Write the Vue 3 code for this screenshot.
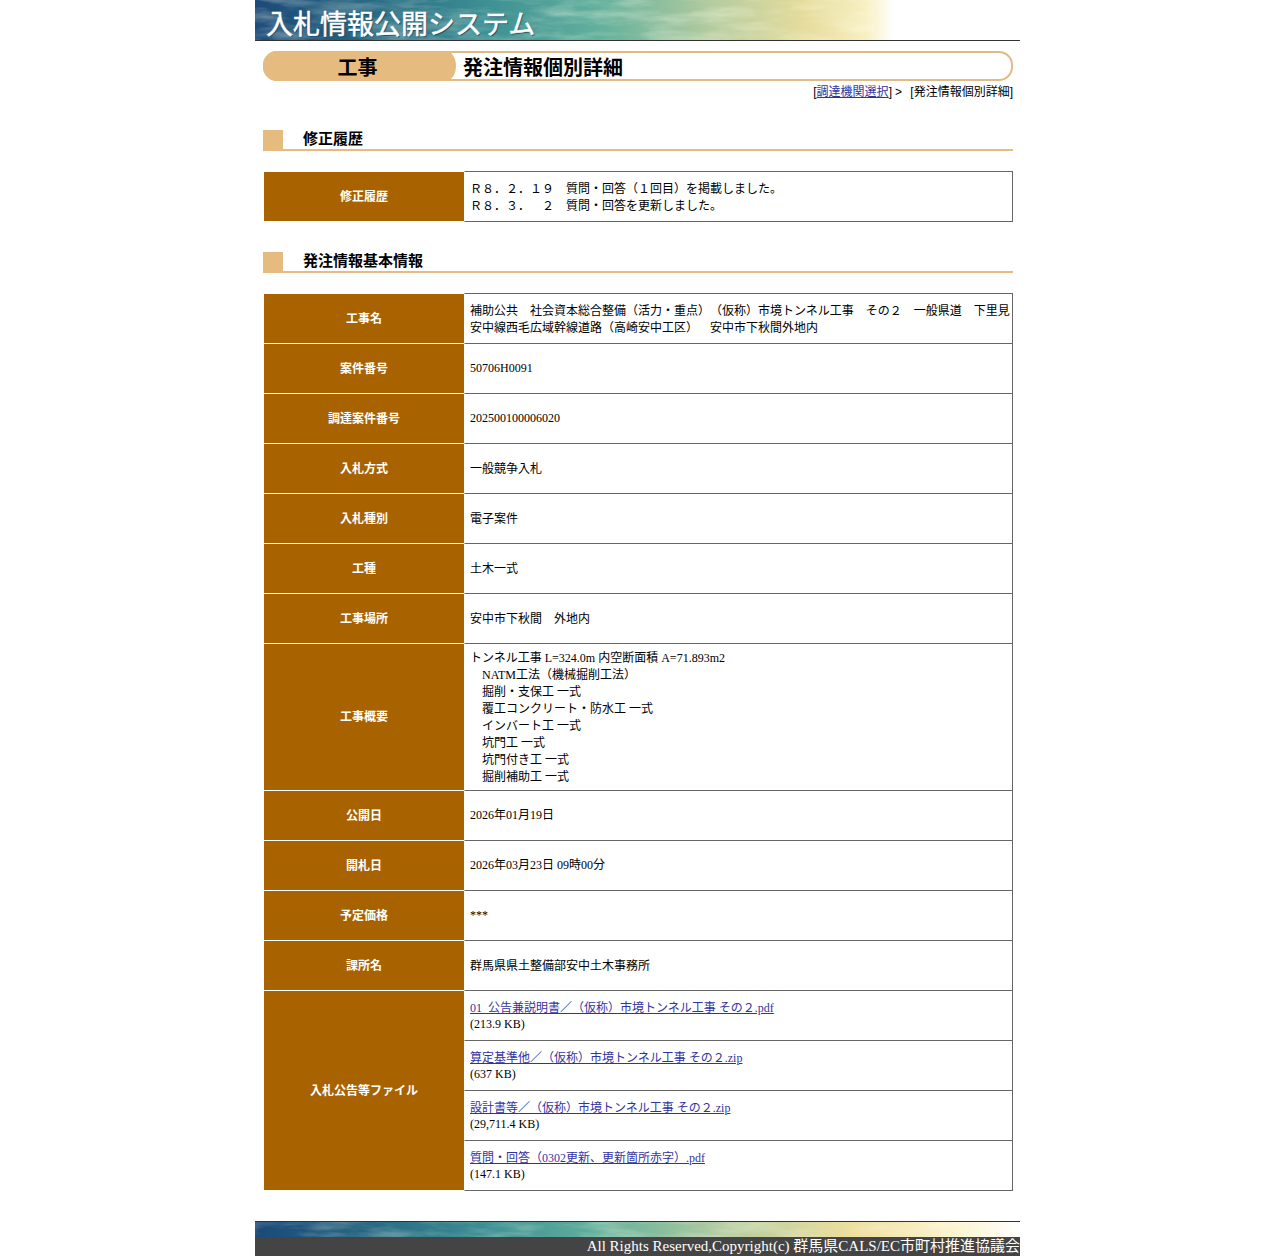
<script setup>
const history = [
  "Ｒ８．２．１９　質問・回答（１回目）を掲載しました。",
  "Ｒ８．３．　２　質問・回答を更新しました。",
];

// num: 英数字が主体の行(ベースラインの関係で少し上に出す)
const rows = [
  { label: "工事名", lines: ["補助公共　社会資本総合整備（活力・重点）（仮称）市境トンネル工事　その２　一般県道　下里見安中線西毛広域幹線道路（高崎安中工区）　安中市下秋間外地内"] },
  { label: "案件番号", num: true, lines: ["50706H0091"] },
  { label: "調達案件番号", num: true, lines: ["202500100006020"] },
  { label: "入札方式", lines: ["一般競争入札"] },
  { label: "入札種別", lines: ["電子案件"] },
  { label: "工種", lines: ["土木一式"] },
  { label: "工事場所", lines: ["安中市下秋間　外地内"] },
  {
    label: "工事概要",
    tall: true,
    lines: [
      "トンネル工事 L=324.0m 内空断面積 A=71.893m2",
      "　NATM工法（機械掘削工法）",
      "　掘削・支保工 一式",
      "　覆工コンクリート・防水工 一式",
      "　インバート工 一式",
      "　坑門工 一式",
      "　坑門付き工 一式",
      "　掘削補助工 一式",
    ],
  },
  { label: "公開日", num: true, lines: ["2026年01月19日"] },
  { label: "開札日", num: true, lines: ["2026年03月23日 09時00分"] },
  { label: "予定価格", num: true, lines: ["***"] },
  { label: "課所名", lines: ["群馬県県土整備部安中土木事務所"] },
];

const files = [
  { name: "01\u00a0\u00a0公告兼説明書／（仮称）市境トンネル工事 その２.pdf", size: "(213.9 KB)" },
  { name: "算定基準他／（仮称）市境トンネル工事 その２.zip", size: "(637 KB)" },
  { name: "設計書等／（仮称）市境トンネル工事 その２.zip", size: "(29,711.4 KB)" },
  { name: "質問・回答（0302更新、更新箇所赤字）.pdf", size: "(147.1 KB)" },
];
</script>

<template>
  <div class="page">
    <!-- ヘッダー画像 -->
    <header class="banner">
      <svg class="clouds" width="765" height="40" aria-hidden="true">
        <filter id="cloudTop" x="0" y="0" width="100%" height="100%">
          <feTurbulence type="fractalNoise" baseFrequency="0.018 0.09" numOctaves="4" seed="7" />
          <feColorMatrix values="0 0 0 0 1  0 0 0 0 1  0 0 0 0 0.85  0 0 0 1.6 -0.62" />
        </filter>
        <rect width="620" height="40" filter="url(#cloudTop)" opacity="0.45" />
      </svg>
      <span class="banner-title">入札情報公開システム</span>
    </header>

    <div class="title-bar">
      <div class="title-kind">工事</div>
      <h1 class="title-text">発注情報個別詳細</h1>
    </div>
    <div class="crumb">[<a href="#">調達機関選択</a>]<span class="arrow">&gt;</span>&nbsp;[発注情報個別詳細]</div>

    <h2 class="section"><span class="mark"></span>修正履歴</h2>
    <table class="info">
      <tbody>
        <tr>
          <th class="end">修正履歴</th>
          <td><div v-for="h in history" :key="h">{{ h }}</div></td>
        </tr>
      </tbody>
    </table>

    <h2 class="section"><span class="mark"></span>発注情報基本情報</h2>
    <table class="info">
      <tbody>
        <tr v-for="row in rows" :key="row.label" :class="{ tall: row.tall }">
          <th>{{ row.label }}</th>
          <td :class="{ num: row.num }"><div v-for="line in row.lines" :key="line">{{ line }}</div></td>
        </tr>
        <tr v-for="(file, i) in files" :key="file.name">
          <th v-if="i === 0" class="end" :rowspan="files.length">入札公告等ファイル</th>
          <td class="file">
            <a href="#">{{ file.name }}</a><br />{{ file.size }}
          </td>
        </tr>
      </tbody>
    </table>

    <footer class="footer">
      <div class="footer-image">
        <svg class="clouds" width="765" height="15" aria-hidden="true">
          <filter id="cloudBottom" x="0" y="0" width="100%" height="100%">
            <feTurbulence type="fractalNoise" baseFrequency="0.018 0.09" numOctaves="4" seed="11" />
            <feColorMatrix values="0 0 0 0 1  0 0 0 0 1  0 0 0 0 0.85  0 0 0 1.6 -0.62" />
          </filter>
          <rect width="765" height="15" filter="url(#cloudBottom)" opacity="0.4" />
        </svg>
      </div>
      <div class="copyright">All Rights Reserved,Copyright(c) 群馬県CALS/EC市町村推進協議会</div>
    </footer>
  </div>
</template>

<style scoped>
.page {
  width: 765px;
  margin-left: 255px;
  font-family: "Liberation Serif", "Noto Sans CJK JP", serif;
  font-size: 12px;
  color: #000;
  text-spacing-trim: space-all;
}

.banner {
  position: relative;
  height: 40px;
  border-bottom: 1px solid #333;
  background: linear-gradient(90deg, #1c4a7a 0, #23607f 12%, #3c8f94 30%, #62b09c 45%, #b5cc9f 60%, #e6dc9c 72%, #f8f0c4 80%, #fff 83.5%);
  overflow: hidden;
}

.clouds {
  position: absolute;
  left: 0;
  top: 0;
}

.banner-title {
  position: absolute;
  left: 11px;
  top: 6px;
  font-family: "Noto Sans CJK JP", sans-serif;
  font-size: 27px;
  line-height: 34px;
  color: #fff;
  -webkit-text-stroke: 0.5px #fff;
  text-shadow: 1px 1px 1px #174a63;
}

.title-bar {
  display: flex;
  align-items: center;
  height: 30px;
  margin: 10px 7px 0 8px;
  box-sizing: border-box;
  border: 2px solid #e0bb85;
  border-radius: 14px;
}

.title-kind {
  width: 189px;
  height: 28px;
  margin: -2px 0 -2px -2px;
  padding: 2px 4px 0 0;
  background: #e5bb7f;
  border-radius: 14px 10px 10px 14px / 15px;
  text-align: center;
  font-family: "Liberation Sans", "Noto Sans CJK JP", sans-serif;
  font-size: 20px;
  font-weight: bold;
  line-height: 31px;
}

.title-text {
  margin: 4px 0 0 7px;
  font-family: "Liberation Sans", "Noto Sans CJK JP", sans-serif;
  font-size: 20px;
  font-weight: bold;
  line-height: 32px;
}

.crumb {
  margin: 3px 7px 0 0;
  height: 16px;
  font-family: "Liberation Sans", "Noto Sans CJK JP", sans-serif;
  line-height: 17px;
  text-align: right;
}

.arrow {
  margin: 0 3px 0 3px;
  padding-right: 2px;
}

.crumb a,
.file a {
  color: #33339f;
}

.section {
  position: relative;
  height: 21px;
  margin: 30px 7px 20px 8px;
  box-sizing: border-box;
  padding-left: 40px;
  border-bottom: 2px solid #e5bb7f;
  font-family: "Liberation Sans", "Noto Sans CJK JP", sans-serif;
  font-size: 15px;
  font-weight: bold;
  line-height: 17px;
}

.mark {
  position: absolute;
  left: 0;
  top: 0;
  width: 20px;
  height: 21px;
  background: #e5bb7f;
}

.info {
  width: 750px;
  margin: 0 0 0 8px;
  border-collapse: separate;
  border-spacing: 0;
  table-layout: fixed;
}

.info th {
  width: 200px;
  padding: 0 0 2px;
  background: #a86300;
  color: #fff;
  border-left: 1px solid #fff;
  border-top: 1px solid #fff;
  font-size: 12px;
  font-weight: bold;
}

.info th.end {
  border-bottom: 1px solid #fffff0;
}

.info td {
  height: 47px;
  padding: 2px 2px 0 5px;
  border-top: 1px solid #666;
  border-right: 1px solid #666;
  border-left: 1px solid #fff;
  line-height: 17px;
}

.info td.num,
.info td.file {
  height: 49px;
  padding-top: 0;
}

.info tr:last-child td {
  border-bottom: 1px solid #666;
}

.info tr.tall td {
  height: 144px;
}

.info td.file {
  line-height: 16px;
}

.footer {
  margin-top: 30px;
}

.footer-image {
  position: relative;
  height: 15px;
  border-top: 1px solid #333;
  background: linear-gradient(90deg, #1c4a7a 0, #23607f 12%, #3c8f94 30%, #62b09c 45%, #b5cc9f 62%, #eedf9e 78%, #fbf4cf 92%, #fff 100%);
  overflow: hidden;
}

.copyright {
  height: 19px;
  background: #444;
  color: #fff;
  font-size: 15px;
  line-height: 19px;
  text-align: right;
  white-space: nowrap;
}
</style>

<style>
body {
  background: #fff;
}
</style>
